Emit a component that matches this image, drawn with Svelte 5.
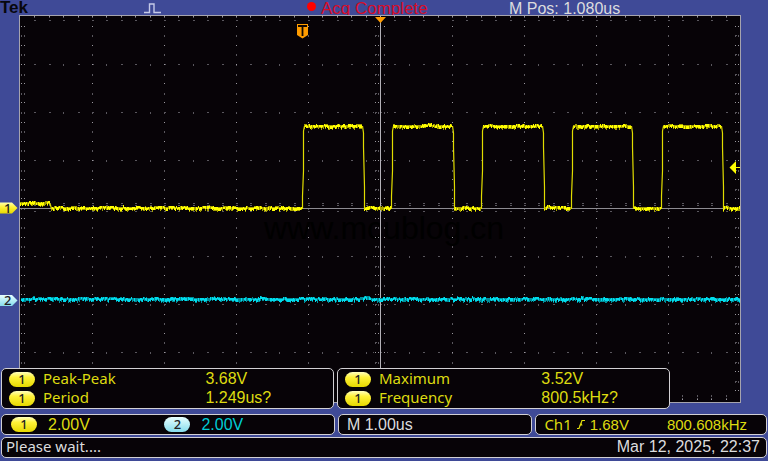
<script lang="ts">
  type Point = [number, number];

  const LEFT = 20;
  const RIGHT = 740;
  const MID_X = 380;
  // plot coordinates start at the top edge of the graticule
  const BOTTOM = 386;
  const MID_Y = 193;

  const measurements = [
    [
      { label: 'Peak-Peak', value: '3.68V' },
      { label: 'Period', value: '1.249us?' }
    ],
    [
      { label: 'Maximum', value: '3.52V' },
      { label: 'Frequency', value: '800.5kHz?' }
    ]
  ];

  function random(seed: number) {
    let s = seed;
    return () => {
      s = (s * 16807) % 2147483647;
      return s / 2147483647;
    };
  }

  const dot = (x: number, y: number, w = 1) => `M${Math.round(x)} ${Math.round(y)}h${w}v1h-${w}z`;

  function graticule() {
    let bright = '';
    let dim = '';
    const cols = [LEFT + 1, LEFT + 4, 375, 378, 384, 735, 738];
    for (let i = 1; i < 10; i++) cols.push(LEFT + i * 72);
    for (let j = 1; j < 40; j++) {
      const y = j * 9.6 + 1;
      for (const x of cols) {
        if (j % 2) bright += dot(x, y);
        else dim += dot(x, y, x === 375 || x === 735 ? 2 : 1) + dot(x, y + 1);
      }
    }
    for (let i = 1; i < 50; i++) {
      const x = LEFT + i * 14.4;
      for (let j = 1; j < 8; j++) {
        if (j === 4) continue;
        const y = j * 48.1 + 0.4;
        dim += i % 3 ? dot(x, y, 2) : dot(x, y) + dot(x, y + 1);
      }
      bright += dot(x, 1) + dot(x, BOTTOM - 2);
      dim += dot(x, 2) + dot(x, 5, 2) + dot(x, BOTTOM - 6) + dot(x, BOTTOM - 5) + dot(x, BOTTOM - 3);
      dim += dot(x, MID_Y - 5, 2) + dot(x, MID_Y - 3, 2) + dot(x, MID_Y + 3, 2);
    }
    for (let j = 1; j < 8; j++) {
      for (const x of [373, 387]) dim += dot(x, j * 48.1 + 0.4);
    }
    return { bright, dim };
  }

  // one vertical sliver per pixel column, jittered round the level
  function noise(from: number, to: number, level: number, rnd: () => number) {
    let bright = '';
    let dim = '';
    let top = level;
    for (let x = from; x < to; x++) {
      if (rnd() > 0.55) top = level - (rnd() > 0.6 ? 1 : 0) - (rnd() > 0.93 ? 1 : 0);
      const h = rnd() > 0.85 ? 5 : rnd() > 0.4 ? 4 : 3;
      dim += `M${x} ${top}h1v${h}h-1z`;
      if (rnd() > 0.2) bright += `M${x} ${top + (rnd() > 0.5 ? 1 : 0)}h1v${h > 3 ? 3 : 2}h-1z`;
    }
    return { bright, dim };
  }

  const HIGH = 110;
  const LOW = 194;
  const pulses = [
    { rise: 302, fall: 362 },
    { rise: 391, fall: 452 },
    { rise: 481, fall: 542 },
    { rise: 571, fall: 631 },
    { rise: 661, fall: 721 }
  ];

  function channelOne() {
    const rnd = random(4711);
    const parts = [noise(20, 50, 187, rnd)];
    const edges: Point[][] = [[[49, 188], [50, 190], [51, 194]]];
    let x = 51;
    for (const { rise, fall } of pulses) {
      parts.push(noise(x, rise, LOW - 2, rnd));
      parts.push(noise(rise + 2, fall, HIGH, rnd));
      edges.push([[rise, LOW], [rise, LOW - 13], [rise + 1, LOW - 38], [rise + 1, HIGH + 6], [rise + 2, HIGH + 1]]);
      edges.push([[fall, HIGH + 1], [fall + 1, HIGH + 8], [fall + 1, HIGH + 22], [fall + 2, LOW - 22], [fall + 2, LOW - 12], [fall + 2, LOW]]);
      x = fall + 2;
    }
    parts.push(noise(x, RIGHT, LOW - 2, rnd));
    return {
      bright: parts.map((p) => p.bright).join(''),
      dim: parts.map((p) => p.dim).join(''),
      edges: edges.map((e) => e.map(([px, py]) => `${px + 0.5},${py}`).join(' '))
    };
  }

  const grid = graticule();
  const ch1 = channelOne();
  const ch2 = noise(LEFT + 1, RIGHT, 283, random(97));
</script>

{#snippet badge(channel: number)}
  <span class="badge" class:cyan={channel === 2}>{channel}</span>
{/snippet}

<main class="scope">
  <header class="topbar">
    <strong class="brand">Tek</strong>
    <svg class="pulse-icon" width="18" height="12" viewBox="0 0 18 12" aria-hidden="true">
      <path d="M0 9.500h5.500v-8.500h4.500v8.500h7" fill="none" stroke="#c5cae8" stroke-width="1.400" />
    </svg>
    <span class="acq"><i class="record"></i>Acq Complete</span>
    <span class="mpos">M Pos: 1.080us</span>
  </header>

  <section class="display">
    <svg class="plot" viewBox="0 0 768 388" role="img" aria-label="Channel 1 and 2 waveforms">
      <defs>
        <linearGradient id="yellow" x2="0" y2="1">
          <stop offset="0" stop-color="#ffffb0" />
          <stop offset="0.4" stop-color="#fff23a" />
          <stop offset="1" stop-color="#e6d800" />
        </linearGradient>
        <linearGradient id="cyan" x2="0" y2="1">
          <stop offset="0" stop-color="#e8ffff" />
          <stop offset="1" stop-color="#86dcec" />
        </linearGradient>
      </defs>
      <rect x="19.5" y="0.5" width="721" height="387" fill="#070307" stroke="#a6a4ae" />
      <text class="watermark" x="264" y="224">www.mcublog.cn</text>
      <g shape-rendering="crispEdges">
        <path d={grid.dim} fill="#5a575e" />
        <path d={grid.bright} fill="#9a989e" />
        <rect x={LEFT} y={MID_Y} width={RIGHT - LEFT} height="1" fill="#8d8b91" />
        <rect x={MID_X} y="1" width="1" height="386" fill="#b4b2b8" />
        <path d={ch1.dim} fill="#a5a000" />
        <path d={ch1.bright} fill="#ffff00" />
        <path d={ch2.dim} fill="#008e9a" />
        <path d={ch2.bright} fill="#00dcec" />
      </g>
      {#each ch1.edges as points}
        <polyline {points} fill="none" stroke="#e0dc00" stroke-width="1.2" />
      {/each}

      <path d="M375 2h11l-5.500 6z" fill="#ff9c00" />
      <path d="M297 9h11v11l-5.500 3.500l-5.500-3.500z" fill="#ff9c00" />
      <path d="M298 11h9M302.500 11v10" stroke="#120800" stroke-width="1.800" fill="none" />
      <path d="M729.500 152.500l6.500-6.500v13zM735 152h5v1h-5z" fill="#ffff00" />

      <path d="M0 187.500h12l5.500 5.500l-5.500 5.500h-12z" fill="url(#yellow)" />
      <text class="marker" x="4" y="198">1</text>
      <path d="M0 280h12l5.500 5.500l-5.500 5.500h-12z" fill="url(#cyan)" />
      <text class="marker" x="4" y="290">2</text>
    </svg>

    <div class="measurements">
      {#each measurements as group}
        <dl class="panel measure">
          {#each group as m}
            <div class="measure-row">
              {@render badge(1)}
              <dt>{m.label}</dt>
              <dd>{m.value}</dd>
            </div>
          {/each}
        </dl>
      {/each}
    </div>
  </section>

  <section class="settings">
    <div class="panel channels">
      <span class="channel">{@render badge(1)} 2.00V</span>
      <span class="channel second">{@render badge(2)} 2.00V</span>
    </div>
    <div class="panel timebase">M 1.00us</div>
    <div class="panel trigger">
      <span class="source">Ch1</span>
      <svg width="8" height="12" viewBox="0 0 8 12" aria-label="rising edge">
        <path d="M0 9.500h2l3-8h3" fill="none" stroke="#e3df10" stroke-width="1.200" />
        <path d="M2 6.500h3.500l-1-2.500z" fill="#e3df10" />
      </svg>
      <span>1.68V</span>
      <span class="counter">800.608kHz</span>
    </div>
  </section>

  <footer class="panel status">
    <span class="message">Please wait....</span>
    <time datetime="2025-03-12T22:37">Mar 12, 2025, 22:37</time>
  </footer>
</main>

<style>
  :global(body) { margin: 0; background: #3f4a97; }
  .scope {
    font-family: "Liberation Sans", Arial, sans-serif; font-size: 16px; line-height: 18px;
    color: #dcdcde; background: #3f4a97; padding-bottom: 3px;
  }
  /* the graticule overlaps the descenders of this row */
  .topbar {
    display: grid; grid-template-columns: 144fr 163fr 202fr 259fr;
    height: 15px;
  }
  .brand { font-size: 17px; line-height: 16px; color: #07070d; }
  .pulse-icon { margin-top: 3px; }
  .acq { display: flex; gap: 5px; font-size: 17px; color: #d80c28; white-space: nowrap; }
  .record { width: 9px; height: 9px; margin-top: 2px; border-radius: 50%; background: #ff0000; }

  .display { position: relative; padding-bottom: 6px; }
  .plot { display: block; width: 100%; height: auto; }
  .watermark { font-size: 32px; fill: #000; }
  .marker { font: 500 13px "Noto Sans", sans-serif; fill: #222; }

  .panel {
    box-sizing: border-box; margin: 0; border: 1px solid #d2d0d4; border-radius: 5px;
    background: #070307;
  }
  .measurements {
    position: absolute; left: 1px; bottom: 0; width: 87.1%;
    display: grid; grid-template-columns: 1fr 1fr; gap: 3px;
  }
  .measure { height: 41px; padding: 0 7px; color: #dedb10; }
  .measure-row { display: grid; grid-template-columns: 34px 163fr 121fr; align-items: center; height: 19px; }
  dt, .source, .message { padding-bottom: 2px; font-family: "Noto Sans", sans-serif; font-size: 15px; }
  dd { margin: 0; }

  .badge {
    display: inline-block; width: 26px; height: 15px; border-radius: 8px; text-align: center;
    font: 500 13px/15px "Noto Sans", sans-serif; color: #222;
    background: linear-gradient(#ffffc0, #fff23a 35%, #e6d800);
  }
  .badge.cyan { background: linear-gradient(#e8ffff, #86dcec); }

  .settings {
    display: grid; grid-template-columns: 333fr 194fr 231fr; gap: 3px;
    padding: 5px 1px 2px;
  }
  .settings .panel { display: flex; align-items: center; height: 21px; }
  .channels { padding: 0 9px; color: #dedb10; }
  .channel { flex: 154; display: flex; align-items: center; gap: 11px; }
  .second { flex: 161; color: #00ccd4; }
  .timebase { padding: 0 8px; }
  .trigger { padding: 0 19px 0 8px; gap: 5px; font-size: 15px; color: #dedb10; }
  .counter { margin-left: auto; }

  .status {
    display: flex; justify-content: space-between; align-items: center;
    height: 21px; margin: 0 1px; padding: 0 6px 2px 4px;
  }
</style>
